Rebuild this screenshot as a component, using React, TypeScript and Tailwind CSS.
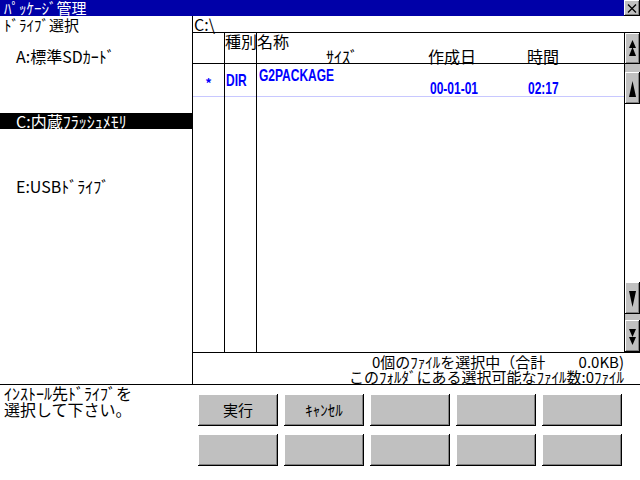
import React from 'react';

const raised =
  'bg-[#c0c0c0] shadow-[inset_-1px_-1px_0_#000,inset_1px_1px_0_#fff,inset_-2px_-2px_0_#808080]';

const drives = [
  { id: 'A', label: 'A:標準SDｶｰﾄﾞ', selected: false },
  { id: 'C', label: 'C:内蔵ﾌﾗｯｼｭﾒﾓﾘ', selected: true },
  { id: 'E', label: 'E:USBﾄﾞﾗｲﾌﾞ', selected: false },
];

const ScrollBtn: React.FC<{ kind: 'top' | 'up' | 'down' | 'bottom'; h: string }> = ({ kind, h }) => (
  <div className={`${raised} ${h} w-full flex items-center justify-center`}>
    <svg width="15" height="31" viewBox="0 0 15 31">
      {kind === 'top' && (
        <>
          <polygon points="7.5,7 4,15 11,15" fill="#000" />
          <polygon points="7.5,14 4,23 11,23" fill="#000" />
        </>
      )}
      {kind === 'up' && <polygon points="7.5,8 4,24 11,24" fill="#000" />}
      {kind === 'down' && <polygon points="7.5,24 4,8 11,8" fill="#000" />}
      {kind === 'bottom' && (
        <>
          <polygon points="7.5,16 4,8 11,8" fill="#000" />
          <polygon points="7.5,24 4,16 11,16" fill="#000" />
        </>
      )}
    </svg>
  </div>
);

export default function App() {
  return (
    <div className="w-[640px] h-[480px] bg-white text-black flex flex-col overflow-hidden font-['Noto_Sans_CJK_JP',sans-serif] text-[16px] leading-[16px]">
      {/* title bar */}
      <div className="h-[16px] bg-[#0000a8] flex items-start justify-between">
        <span className="pl-[4px] text-white text-[15px] leading-[16px] whitespace-pre">ﾊﾟｯｹｰｼﾞ管理</span>
        <div className={`${raised} w-[16px] h-[16px] flex items-center justify-center`}>
          <svg width="10" height="9" viewBox="0 0 10 9">
            <path d="M1 0.5 L9 8.5 M9 0.5 L1 8.5" stroke="#000" strokeWidth="1.3" />
          </svg>
        </div>
      </div>

      {/* main */}
      <div className="h-[369px] flex border-b border-black">
        {/* drive list */}
        <div className="w-[193px] border-r border-black flex flex-col">
          <div className="h-[16px] pl-[4px] pt-[1px] text-[15px] whitespace-pre">ﾄﾞﾗｲﾌﾞ選択</div>
          <div className="mt-[16px] flex flex-col gap-[49px]">
            {drives.map((d) => (
              <div
                key={d.id}
                className={`h-[16px] pl-[16px] whitespace-pre ${d.selected ? 'bg-black text-white' : ''}`}
              >
                {d.label}
              </div>
            ))}
          </div>
        </div>

        {/* file list */}
        <div className="flex-1 flex flex-col">
          <div className="h-[17px] border-b border-black pl-[1px]">C:\</div>

          <div className="h-[320px] flex border-b border-black">
            <div className="w-[32px] border-r border-black flex flex-col">
              <div className="h-[31px] border-b border-black" />
              <div className="h-[33px] border-b border-[#c8c8ff] text-center pt-[12px] text-[#0000ff] font-bold text-[13px] leading-[13px]">
                *
              </div>
            </div>
            <div className="w-[32px] border-r border-black flex flex-col">
              <div className="h-[31px] border-b border-black whitespace-nowrap relative z-10">種別</div>
              <div className="h-[33px] border-b border-[#c8c8ff] pl-[1px] pt-[3px] text-[#0000ff]">
                <span className="inline-block origin-top-left scale-y-[1.35] font-['Liberation_Sans',sans-serif] font-bold text-[12px] leading-[12px]">
                  DIR
                </span>
              </div>
            </div>
            <div className="flex-1 flex flex-col">
              <div className="h-[31px] border-b border-black flex flex-col">
                <div className="h-[15px]">名称</div>
                <div className="flex pl-[69px] whitespace-pre">
                  <span className="w-[102px]">ｻｲｽﾞ</span>
                  <span className="w-[99px]">作成日</span>
                  <span>時間</span>
                </div>
              </div>
              <div className="h-[33px] border-b border-[#c8c8ff] flex flex-col pl-[2px] pt-[3px] text-[#0000ff] font-['Liberation_Sans',sans-serif] font-bold text-[12px] leading-[12px]">
                <div className="h-[13px]">
                  <span className="inline-block origin-top-left scale-y-[1.35]">G2PACKAGE</span>
                </div>
                <div className="flex pl-[171px]">
                  <span className="w-[98px] inline-block origin-top-left scale-y-[1.35]">00-01-01</span>
                  <span className="inline-block origin-top-left scale-y-[1.35]">02:17</span>
                </div>
              </div>
            </div>
            <div className="w-[16px] border-l border-black flex flex-col">
              <ScrollBtn kind="top" h="h-[31px]" />
              <div className="h-[8px] bg-[#c0c0c0]" />
              <ScrollBtn kind="up" h="h-[32px]" />
              <div className="flex-1 bg-white" />
              <ScrollBtn kind="down" h="h-[32px]" />
              <div className="h-[6px] bg-[#c0c0c0]" />
              <ScrollBtn kind="bottom" h="h-[32px]" />
            </div>
          </div>

          <div className="h-[31px] flex flex-col items-end pr-[16px] pt-[1px] text-[15px] leading-[15px] whitespace-pre">
            <div>0個のﾌｧｲﾙを選択中（合計　　 0.0KB)</div>
            <div>このﾌｫﾙﾀﾞにある選択可能なﾌｧｲﾙ数:0ﾌｧｲﾙ</div>
          </div>
        </div>
      </div>

      {/* footer */}
      <div className="flex-1 flex">
        <div className="w-[198px] pl-[4px] leading-[16px] whitespace-pre">
          <div>ｲﾝｽﾄｰﾙ先ﾄﾞﾗｲﾌﾞを</div>
          <div>選択して下さい。</div>
        </div>
        <div className="pt-[9px] grid grid-cols-[repeat(5,80px)] auto-rows-[32px] gap-x-[6px] gap-y-[8px]">
          {['実行', 'ｷｬﾝｾﾙ', '', '', '', '', '', '', '', ''].map((t, i) => (
            <div key={i} className={`${raised} flex items-center justify-center text-[15px] whitespace-pre`}>
              {t}
            </div>
          ))}
        </div>
      </div>
    </div>
  );
}
